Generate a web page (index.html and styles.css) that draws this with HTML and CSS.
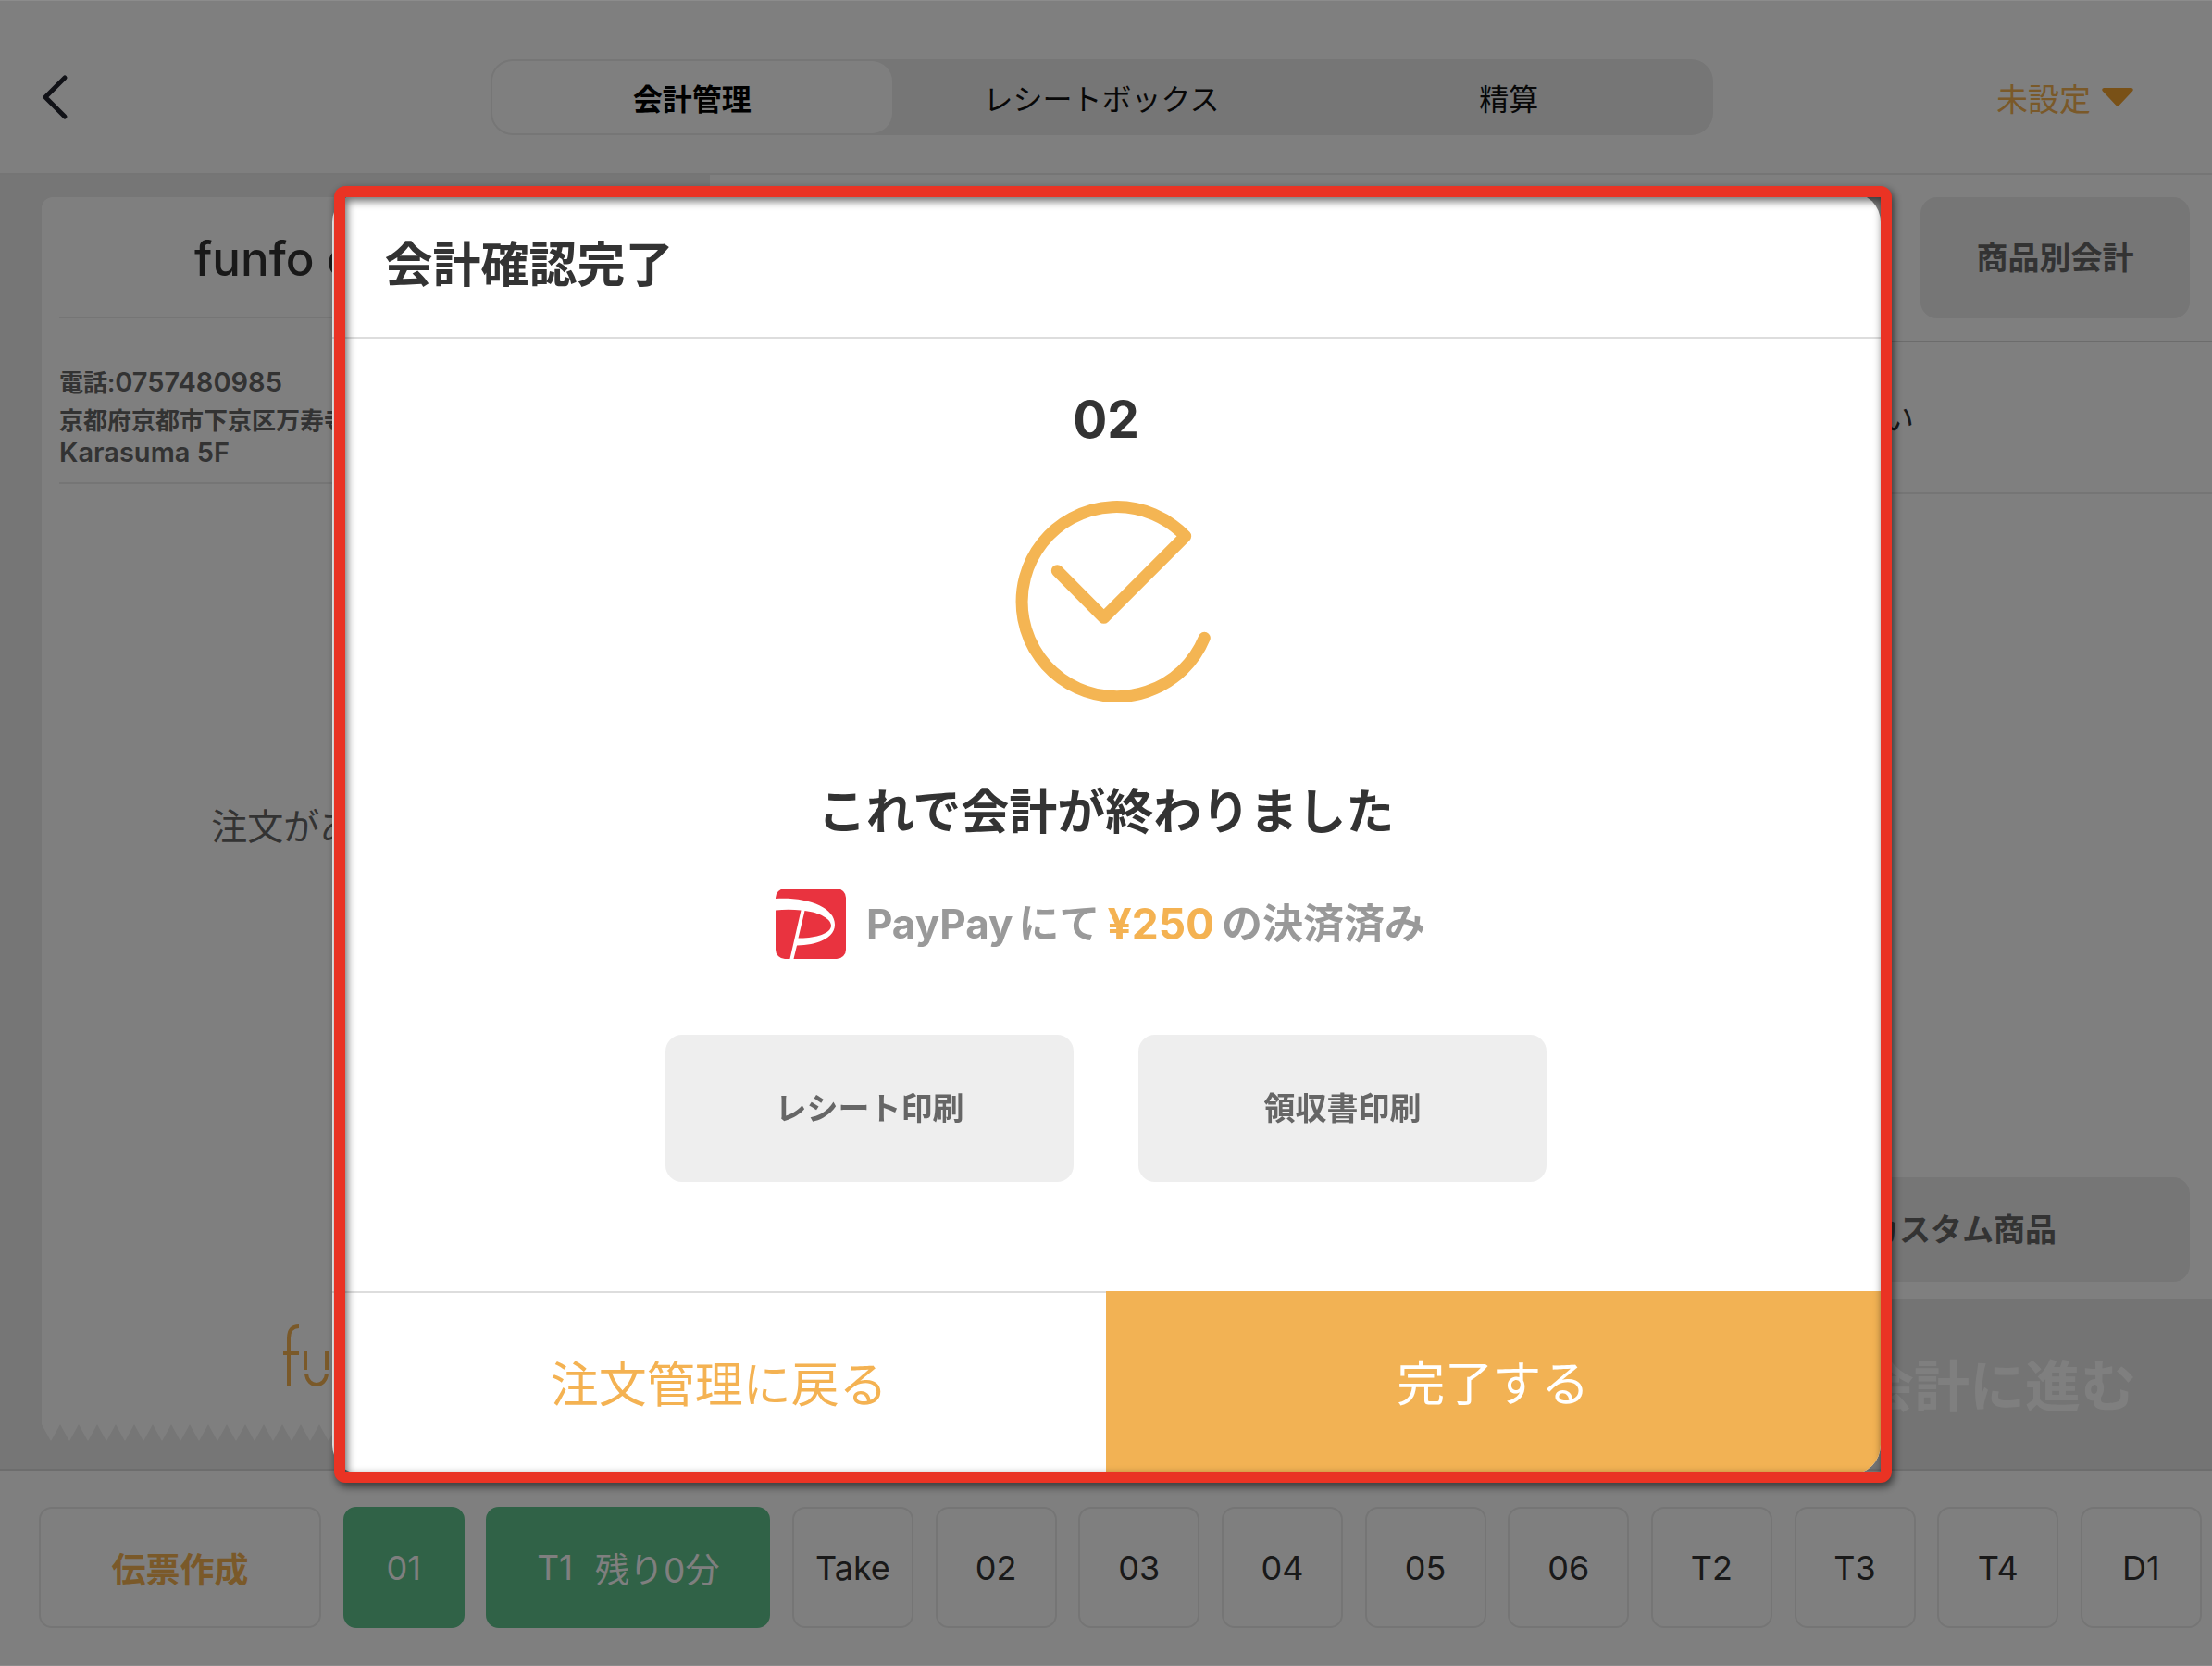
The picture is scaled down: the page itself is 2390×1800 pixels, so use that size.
FILE: index.html
```html
<!DOCTYPE html>
<html lang="ja">
<head>
<meta charset="utf-8">
<meta name="viewport" content="width=device-width, initial-scale=1">
<title>会計確認完了</title>
<link rel="stylesheet" href="styles.css">
</head>
<body>
<div class="app">
  <header class="topbar">
    <button class="back" type="button" aria-label="戻る">
      <svg width="32" height="52" viewBox="0 0 32 52" fill="none" stroke="#23242f" stroke-width="5" stroke-linecap="round" stroke-linejoin="round"><path d="M25 5 4 26l21 21"/></svg>
    </button>
    <nav class="segments">
      <button class="segment segment-active" type="button">会計管理</button>
      <button class="segment" type="button">レシートボックス</button>
      <button class="segment" type="button">精算</button>
    </nav>
    <button class="status" type="button">未設定
      <svg width="34" height="20" viewBox="0 0 34 20" fill="#f3a22f"><path d="M2.500 0h29c2 0 3 2 1.600 3.500L19 18.500c-1.200 1.300-2.800 1.300-4 0L.9 3.500C-.5 2 .5 0 2.500 0z"/></svg>
    </button>
  </header>

  <main class="workspace">
    <section class="receipt-panel">
      <article class="receipt">
        <div class="receipt-body">
          <h2 class="shop-name">funfo d</h2>
          <address class="shop-info">
            <span class="phone">電話:<span class="latin">0757480985</span></span>
            <span>京都府京都市下京区万寿寺</span>
            <span class="latin">Karasuma 5F</span>
          </address>
          <p class="empty">注文がありません</p>
          <svg class="brand" width="156" height="70" viewBox="0 0 156 70" fill="none" stroke="#f4b252" stroke-width="4">
            <path d="M6 68V17Q6 4 17 4M0 33h17M24 31v20M47 31v20M25 55c1 16 21 16 22 0"/>
            <path d="M61 68V48M84 68V48M61 44c1-15 22-15 23 0M102 68V17q0-13 11-13M96 33h17"/>
            <circle cx="136" cy="50" r="17"/>
          </svg>
        </div>
        <svg class="tear" height="18" aria-hidden="true">
          <defs><pattern id="teeth" width="20" height="18" patternUnits="userSpaceOnUse"><path d="M0 0h20L10 18z" fill="#fff"/></pattern></defs>
          <rect width="100%" height="18" fill="url(#teeth)"/>
        </svg>
      </article>
    </section>
    <section class="order-panel">
      <div class="order-tools"><button class="soft-button split" type="button">商品別会計</button></div>
      <p class="hint">商品を選択してください</p>
      <div class="custom-row"><button class="soft-button custom" type="button">カスタム商品</button></div>
      <button class="checkout" type="button">会計に進む</button>
    </section>
  </main>

  <footer class="tables">
    <button class="table-button create" type="button">伝票作成</button>
    <button class="table-button busy" type="button">01</button>
    <button class="table-button busy timed" type="button"><span>T1</span><span>残り0分</span></button>
    <button class="table-button" type="button">Take</button>
    <button class="table-button" type="button">02</button>
    <button class="table-button" type="button">03</button>
    <button class="table-button" type="button">04</button>
    <button class="table-button" type="button">05</button>
    <button class="table-button" type="button">06</button>
    <button class="table-button" type="button">T2</button>
    <button class="table-button" type="button">T3</button>
    <button class="table-button" type="button">T4</button>
    <button class="table-button" type="button">D1</button>
  </footer>
</div>

<div class="overlay">
  <div class="modal-wrap">
    <div class="modal" role="dialog" aria-modal="true" aria-labelledby="modal-title">
      <h1 class="modal-title" id="modal-title">会計確認完了</h1>
      <div class="modal-body">
        <p class="table-number">02</p>
        <svg class="done-icon" width="232" height="218" viewBox="1079 541 232 218" fill="none" stroke="#f4b553" stroke-width="13" stroke-linecap="round" stroke-linejoin="round"><path d="M1142.300 616.700 1192.700 667.300 1280.700 579.300A102.500 102.500 0 1 0 1301.300 689.300"/></svg>
        <p class="message">これで会計が終わりました</p>
        <p class="payment">
          <svg class="paypay" width="76" height="76" viewBox="0 0 76 76">
            <rect width="76" height="76" rx="10" fill="#e9333f"/>
            <path fill="#fff" d="M0 11C34 9 64 20 64 39C64 53 46 61 23 61.500L19.500 76H15.500L27.500 23.500C19 22.500 9 22.500 0 23.500ZM31.500 24L24.500 53.500C42 54 60 49 60 40C60 33 48 26 31.500 24Z"/>
          </svg>
          <span class="payment-text">PayPay<span class="particle">にて</span></span>
          <strong class="amount">¥250</strong>
          <span class="payment-text">の決済済み</span>
        </p>
        <div class="print-actions">
          <button class="print-button" type="button">レシート印刷</button>
          <button class="print-button" type="button">領収書印刷</button>
        </div>
      </div>
      <div class="modal-actions">
        <button class="action return" type="button">注文管理に戻る</button>
        <button class="action finish" type="button">完了する</button>
      </div>
    </div>
    <div class="highlight"></div>
  </div>
</div>
</body>
</html>
```
FILE: styles.css
```css
* { box-sizing: border-box; }

body {
  margin: 0;
  font-family: Inter, "Noto Sans CJK JP", sans-serif;
  background: #fff;
  color: #333;
}

h1, h2, p { margin: 0; }

button {
  margin: 0;
  padding: 0;
  border: 0;
  background: none;
  color: inherit;
  font: inherit;
  white-space: nowrap;
}

svg { display: block; flex: none; }

.app {
  display: grid;
  grid-template-rows: auto 1fr auto;
  min-height: 100vh;
}

/* Top bar */
.topbar {
  display: grid;
  grid-template-columns: 1fr minmax(0, 1321px) 1fr;
  align-items: center;
  padding: 64px 10px 41px 0;
  border-bottom: 2px solid #ebebeb;
}

.back { justify-self: start; padding-left: 45px; }

.segments {
  display: grid;
  grid-template-columns: repeat(3, 1fr);
  height: 82px;
  border-radius: 24px;
  background: #ececec;
  color: #111;
  font-size: 32px;
}

.segment-active {
  margin: 2px 6px 2px 2px;
  border-radius: 22px;
  background: #fff;
  color: #000;
  font-weight: 700;
}

.status {
  display: flex;
  align-items: center;
  justify-self: end;
  gap: 12px;
  padding-right: 75px;
  color: #f4b252;
  font-size: 34px;
}

/* Receipt */
.workspace {
  display: grid;
  grid-template-columns: 32.1% 1fr;
}

.receipt-panel {
  display: flex;
  padding: 24px 45px 30px;
  background: #ececec;
}

.receipt {
  display: flex;
  flex: 1;
  flex-direction: column;
}

.receipt-body {
  display: flex;
  flex: 1;
  flex-direction: column;
  padding: 0 19px 40px;
  border-radius: 12px 12px 0 0;
  background: #fff;
}

.tear { width: 100%; }

.shop-name {
  padding: 37px 0 32px 146px;
  border-bottom: 2px solid #ebebeb;
  font-size: 51px;
  font-weight: 500;
  line-height: 60px;
}

.shop-info {
  display: flex;
  flex-direction: column;
  padding: 52px 0 15px;
  border-bottom: 2px solid #ebebeb;
  color: #666;
  font-size: 26px;
  font-style: normal;
  font-weight: 600;
  line-height: 34px;
  white-space: nowrap;
}

.shop-info .phone { margin-bottom: 7px; }
.latin { font-size: 29px; }

.empty {
  margin: 342px 0 auto;
  color: #666;
  font-size: 39px;
  line-height: 56px;
  text-align: center;
}

.brand { align-self: center; }

/* Order panel */
.order-panel {
  display: flex;
  flex-direction: column;
}

.order-tools {
  display: flex;
  justify-content: flex-end;
  padding: 24px;
  border-bottom: 2px solid #d8d8d8;
}

.soft-button {
  padding-bottom: 4px;
  border-radius: 18px;
  background: #ececec;
  color: #666;
  font-size: 34px;
  font-weight: 700;
}

.split { width: 291px; height: 131px; }

.hint {
  padding: 58px 322px 54px 0;
  border-bottom: 2px solid #ebebeb;
  font-size: 34px;
  line-height: 50px;
  text-align: right;
}

.custom-row {
  display: flex;
  justify-content: flex-end;
  margin-top: auto;
  padding: 0 24px 19px;
}

.custom { width: 492px; height: 113px; }

.checkout {
  height: 183px;
  padding: 0 82px 4px 0;
  background: #e8e8e8;
  color: #fff;
  font-size: 60px;
  font-weight: 700;
  text-align: right;
}

/* Table list */
.tables {
  display: flex;
  justify-content: space-between;
  padding: 39px 11px 41px 42px;
  border-top: 2px solid #dadada;
}

.table-button {
  width: 131px;
  height: 131px;
  border: 2px solid #ebebeb;
  border-radius: 14px;
  font-size: 36px;
}

.create {
  width: 305px;
  color: #f4b252;
  font-size: 37px;
  font-weight: 700;
}

.busy {
  border-color: #60c48e;
  background: #60c48e;
  color: #fff;
}

.timed {
  display: flex;
  align-items: center;
  justify-content: center;
  gap: 24px;
  width: 307px;
  font-size: 37px;
}

/* Completion dialog */
.overlay {
  position: fixed;
  inset: 0;
  display: grid;
  grid-template-columns: 70%;
  place-content: center;
  border: solid rgba(255, 255, 255, 0.1);
  border-width: 1px 0;
  background: rgba(0, 0, 0, 0.5);
}

.modal-wrap { position: relative; }

.modal {
  overflow: hidden;
  border-radius: 32px;
  background: #fff;
}

.modal-title {
  padding: 49px 57px 47px;
  border-bottom: 2px solid #ddd;
  font-size: 52px;
  font-weight: 700;
  line-height: 60px;
}

.modal-body {
  display: flex;
  flex-direction: column;
  align-items: center;
  padding: 57px 24px 118px;
}

.table-number {
  font-size: 55px;
  font-weight: 700;
  line-height: 60px;
}

.done-icon { margin: 58px 0 89px; }

.message {
  font-size: 52px;
  font-weight: 700;
  line-height: 60px;
}

.payment {
  display: flex;
  align-items: center;
  gap: 8px;
  margin: 52px 12px 82px 0;
  color: #999;
  font-size: 44px;
  font-weight: 700;
  line-height: 60px;
}

.paypay { margin-right: 14px; }
.particle { margin-left: 6px; }
.amount { color: #f4b252; font-size: 46px; font-weight: 700; }

.print-actions { display: flex; gap: 70px; }

.print-button {
  width: 441px;
  height: 159px;
  padding-bottom: 4px;
  border-radius: 18px;
  background: #eee;
  color: #666;
  font-size: 34px;
  font-weight: 700;
}

.modal-actions {
  display: grid;
  grid-template-columns: 1fr 1fr;
}

.action {
  height: 198px;
  padding-bottom: 4px;
  font-size: 52px;
}

.return { border-top: 2px solid #ddd; color: #f4b252; }
.finish { background: #f2b254; color: #fff; }

/* Marker frame drawn over the dialog edge */
.highlight {
  position: absolute;
  inset: -7px -12px -9px 2px;
  border: 12px solid #ea3324;
  border-radius: 12px;
  filter: drop-shadow(2px 4px 5px rgba(0, 0, 0, 0.6));
  pointer-events: none;
}
```
